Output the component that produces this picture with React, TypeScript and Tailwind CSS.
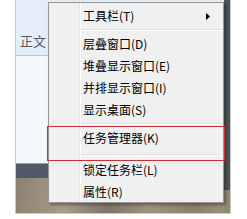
const items1 = ['层叠窗口(D)', '堆叠显示窗口(E)', '并排显示窗口(I)', '显示桌面(S)'];

function Item({ label, arrow }: { label: string; arrow?: boolean }) {
  return (
    <div className="flex h-[22px] items-center pl-[34px] pr-[12px]">
      <span className="flex-1 whitespace-nowrap text-[12px] leading-none text-black">{label}</span>
      {arrow && (
        <svg width="4" height="7" viewBox="0 0 4 7" className="mr-[1px]">
          <path d="M0 0 L4 3.5 L0 7 Z" fill="#000" />
        </svg>
      )}
    </div>
  );
}

function Sep({ h, top }: { h: string; top: string }) {
  return (
    <div className={`${h} ${top} flex flex-col pl-[31px] pr-[1px]`}>
      <div className="h-px bg-[#e0e0e0]" />
      <div className="h-px bg-white" />
    </div>
  );
}

export default function App() {
  return (
    <div
      className="relative h-[219px] w-[247px] overflow-hidden bg-white"
      style={{ fontFamily: '"Noto Sans CJK SC", "Microsoft YaHei", sans-serif' }}
    >
      {/* framed screenshot */}
      <div className="ml-[15px] flex h-[214px] w-[216px] flex-col border-x border-b border-[#c8c8c8]">
        <div className="flex flex-1">
          <div className="flex flex-1 flex-col">
            <div className="flex h-[55px] items-end bg-[#e4eef8] pb-[8px] pl-[4px]">
              <span className="text-[13px] leading-none text-[#5a5a5a]">正文</span>
            </div>
            <div className="h-px bg-[#a9c4de]" />
            <div className="flex-1 bg-[#f3f7fb]" />
            <div className="h-px bg-[#41c4e6]" />
            <div className="h-[14px] bg-[#4f5967]" />
            <div className="h-[35px] bg-[linear-gradient(100deg,#8c8070_0%,#a89c8a_25%,#7f7668_45%,#a0927e_65%,#8a7e6c_85%,#9c8f7a_100%)]" />
          </div>
          <div className="flex w-[6px] flex-col">
            <div className="h-[190px] bg-[#4d535b]" />
            <div className="flex-1 bg-[#948774]" />
          </div>
        </div>
      </div>

      {/* context menu */}
      <div className="absolute left-[48px] top-[2px] h-[201px] w-[176px] border border-[#979797] bg-[#f0f0f0] shadow-[2px_2px_3px_rgba(0,0,0,0.35)]">
        <div className="absolute bottom-0 left-[30px] top-0 w-px bg-[#e2e3e3]" />
        <div className="absolute bottom-0 left-[31px] top-0 w-px bg-white" />
        <div className="relative flex flex-col pt-[2px]">
          <Item label="工具栏(T)" arrow />
          <Sep h="h-[6px]" top="pt-[2px]" />
          {items1.map((l) => (
            <Item key={l} label={l} />
          ))}
          <Sep h="h-[6px]" top="pt-[2px]" />
          <Item label="任务管理器(K)" />
          <Sep h="h-[10px]" top="pt-[5px]" />
          <Item label="锁定任务栏(L)" />
          <Item label="属性(R)" />
        </div>
      </div>

      {/* red highlight */}
      <div className="absolute left-[47px] top-[126px] h-[35px] w-[178px] border border-[#c2303a]" />
    </div>
  );
}
